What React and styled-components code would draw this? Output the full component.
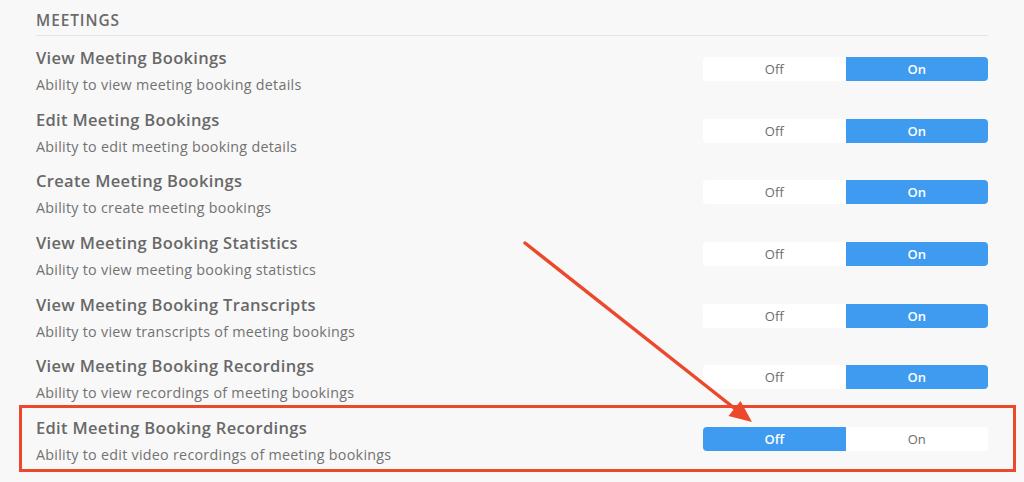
import React from "react";
import styled, { createGlobalStyle } from "styled-components";

const GlobalStyle = createGlobalStyle`
  html, body { margin: 0; padding: 0; background: #f8f8f8; }
  body { font-family: "Open Sans", "Liberation Sans", sans-serif; }
`;

const Page = styled.div`
  position: relative;
  width: 1024px;
  height: 482px;
  overflow: hidden;
  background: #f8f8f8;
  box-sizing: border-box;
  padding: 0 36px;
`;

const SectionHeader = styled.div`
  height: 36px;
  display: flex;
  align-items: center;
  padding-top: 5px;
  box-sizing: border-box;
  border-bottom: 1px solid #e4e4e4;
  font-size: 15.4px;
  font-weight: 600;
  letter-spacing: 0.95px;
  color: #6a6a6a;
  text-transform: uppercase;
`;

const List = styled.div`
  padding-top: 2.17px;
  display: flex;
  flex-direction: column;
`;

const Row = styled.div`
  position: relative;
  height: 61.67px;
  display: flex;
  align-items: center;
  justify-content: space-between;

  ${(p) =>
    p.$highlight &&
    `
    &::after {
      content: "";
      position: absolute;
      left: -17px;
      right: -28px;
      top: -3px;
      bottom: -2px;
      border: 3px solid #ec482c;
      pointer-events: none;
    }
  `}
`;

const Texts = styled.div`
  display: flex;
  flex-direction: column;
  gap: 6px;
  padding-top: 4px;
`;

const Title = styled.div`
  font-size: 16.5px;
  line-height: 22px;
  font-weight: 600;
  color: #686868;
  letter-spacing: 0.32px;
`;

const Desc = styled.div`
  font-size: 14.3px;
  line-height: 20px;
  color: #727272;
  letter-spacing: 0.27px;
`;

const Toggle = styled.div`
  display: flex;
  width: 285px;
  height: 24px;
  border-radius: 4px;
  overflow: hidden;
  background: #ffffff;
`;

const Option = styled.div`
  flex: 1;
  display: flex;
  align-items: center;
  justify-content: center;
  font-size: 13px;
  font-weight: ${(p) => (p.$active ? 600 : 500)};
  color: ${(p) => (p.$active ? "#ffffff" : "#6c6c6c")};
  background: ${(p) => (p.$active ? "#3f9bef" : "#ffffff")};
`;

const Arrow = styled.svg`
  position: absolute;
  left: 0;
  top: 0;
  pointer-events: none;
`;

const rows = [
  ["View Meeting Bookings", "Ability to view meeting booking details", true],
  ["Edit Meeting Bookings", "Ability to edit meeting booking details", true],
  ["Create Meeting Bookings", "Ability to create meeting bookings", true],
  ["View Meeting Booking Statistics", "Ability to view meeting booking statistics", true],
  ["View Meeting Booking Transcripts", "Ability to view transcripts of meeting bookings", true],
  ["View Meeting Booking Recordings", "Ability to view recordings of meeting bookings", true],
  ["Edit Meeting Booking Recordings", "Ability to edit video recordings of meeting bookings", false, true],
];

export default function App() {
  return (
    <>
      <GlobalStyle />
      <Page>
        <SectionHeader>Meetings</SectionHeader>
        <List>
          {rows.map(([title, desc, on, hl]) => (
            <Row key={title} $highlight={hl}>
              <Texts>
                <Title>{title}</Title>
                <Desc>{desc}</Desc>
              </Texts>
              <Toggle>
                <Option $active={!on}>Off</Option>
                <Option $active={on}>On</Option>
              </Toggle>
            </Row>
          ))}
        </List>
        <Arrow width="1024" height="482" viewBox="0 0 1024 482">
          <line x1="525" y1="243" x2="736" y2="409.5" stroke="#ec482c" strokeWidth="3.5" strokeLinecap="round" />
          <polygon points="752,422 728.5,416 740.5,401" fill="#ec482c" />
        </Arrow>
      </Page>
    </>
  );
}
